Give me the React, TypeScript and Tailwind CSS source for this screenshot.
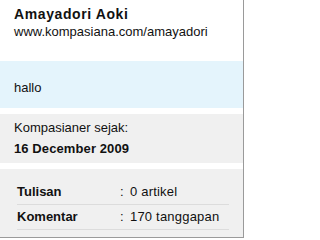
import React from "react";

export default function App() {
  const font = { fontFamily: '"Liberation Sans", Arial, sans-serif' };
  return (
    <div className="w-[244px] h-[238px] bg-white text-[#111] border-r border-b border-[#9a9a9a] flex flex-col" style={font}>
      <div className="h-[61px] pt-[6px] pl-[14px]">
        <div className="text-[14px] leading-[17px] font-bold tracking-[0.6px]">Amayadori Aoki</div>
        <div className="text-[13px] leading-[17px]">www.kompasiana.com/amayadori</div>
      </div>
      <div className="h-[47px] bg-[#e4f4fc] pt-[18px] pl-[14px] text-[13px] leading-[17px]">hallo</div>
      <div className="h-[6px]" />
      <div className="h-[49px] bg-[#f0f0f0] pt-[3px] pl-[14px] text-[13px] leading-[21px]">
        <div>Kompasianer sejak:</div>
        <div className="font-bold tracking-[0.1px]">16 December 2009</div>
      </div>
      <div className="h-[6px]" />
      <div className="flex-1 bg-[#f0f0f0] pt-[11px] pl-[17px] pr-[14px] text-[13px]">
        <div className="flex h-[25px] leading-[24px] border-b border-[#dcdcdc]">
          <div className="w-[103px] font-bold">Tulisan</div>
          <div className="w-[10px]">:</div>
          <div className="tracking-[0.2px]">0 artikel</div>
        </div>
        <div className="flex h-[25px] leading-[24px] border-b border-[#dcdcdc]">
          <div className="w-[103px] font-bold">Komentar</div>
          <div className="w-[10px]">:</div>
          <div className="tracking-[0.2px]">170 tanggapan</div>
        </div>
      </div>
    </div>
  );
}
